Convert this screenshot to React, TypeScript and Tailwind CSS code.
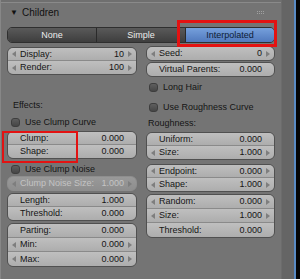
import React from "react";

type Row = { label: string; value: string; arrows?: boolean };

const font = { fontFamily: '"Liberation Sans", Arial, sans-serif' };

function Arrow({ dir }: { dir: "l" | "r" }) {
  return (
    <svg width="4" height="6" viewBox="0 0 4 6" className="shrink-0">
      {dir === "l" ? <path d="M4 0L0 3l4 3z" fill="#7e7e7e" /> : <path d="M0 0l4 3-4 3z" fill="#7e7e7e" />}
    </svg>
  );
}

function FieldRow({ label, value, arrows, tall }: Row & { tall?: boolean }) {
  return (
    <div
      className={`flex ${tall ? "h-[14px]" : "h-[13px]"} items-center whitespace-nowrap bg-gradient-to-b from-[#bfbfbf] to-[#adadad] text-[9px] leading-none text-[#151515]`}
    >
      <div className="flex w-[12px] justify-center">{arrows && <Arrow dir="l" />}</div>
      <span className="flex-1">{label}</span>
      <span>{value}</span>
      <div className="flex w-[12px] justify-center">{arrows && <Arrow dir="r" />}</div>
    </div>
  );
}

function Group({ rows, tall, className = "" }: { rows: Row[]; tall?: boolean; className?: string }) {
  return (
    <div className={`overflow-hidden rounded-[6px] border border-[#505050] divide-y divide-[#8a8a8a] ${className}`}>
      {rows.map((r) => (
        <FieldRow key={r.label} tall={tall} {...r} />
      ))}
    </div>
  );
}

function Check({ label, className = "" }: { label: string; className?: string }) {
  return (
    <div className={`flex h-[14px] items-center gap-[5px] whitespace-nowrap text-[9px] leading-none text-[#151515] ${className}`}>
      <div className="h-[9px] w-[9px] rounded-[3px] border border-[#3e3e3e] bg-gradient-to-b from-[#5e5e5e] to-[#464646]" />
      <span>{label}</span>
    </div>
  );
}

function Label({ text, className = "" }: { text: string; className?: string }) {
  return (
    <div className={`flex h-[14px] items-center whitespace-nowrap text-[9px] leading-none text-[#151515] ${className}`}>{text}</div>
  );
}

export default function App() {
  return (
    <div className="relative flex h-[279px] w-[300px] overflow-hidden bg-[#747474]" style={font}>
      {/* panel */}
      <div className="relative flex-1 border-l border-[#878787]">
        <div className="h-[3px] border-b border-[#8a8a8a] bg-[#6f6f6f]" />
        {/* header */}
        <div className="flex h-[19px] items-center pl-[9px] pr-[8px] text-[10px] leading-none text-[#111]">
          <span className="mr-[4px] text-[8px]">▼</span>
          <span>Children</span>
          <div className="ml-auto mr-[9px] grid grid-cols-4 gap-[1px]">
            {Array.from({ length: 8 }).map((_, i) => (
              <div key={i} className="h-[1px] w-[1px] bg-[#a0a0a0]" />
            ))}
          </div>
        </div>

        {/* tabs */}
        <div className="ml-[6px] mt-[5px] flex h-[16px] w-[268px] overflow-hidden rounded-[5px] border border-[#2f2f2f] whitespace-nowrap text-[9px] leading-none">
          <div className="flex flex-1 items-center justify-center border-r border-[#2a2a2a] bg-gradient-to-b from-[#5a5a5a] to-[#3e3e3e] text-[#ececec]">None</div>
          <div className="flex flex-1 items-center justify-center border-r border-[#2a2a2a] bg-gradient-to-b from-[#5a5a5a] to-[#3e3e3e] text-[#ececec]">Simple</div>
          <div className="flex flex-1 items-center justify-center bg-gradient-to-b from-[#76a0dc] to-[#5079bd] text-[#0e1c36]">Interpolated</div>
        </div>

        {/* columns */}
        <div className="ml-[6px] mt-[3px] flex w-[268px] gap-[9px]">
          {/* left */}
          <div className="flex w-[130px] flex-col">
            <Group className="mt-[1px]" rows={[{ label: "Display:", value: "10", arrows: true }, { label: "Render:", value: "100", arrows: true }]} />
            <Label text="Effects:" className="mt-[23px] pl-[6px]" />
            <Check label="Use Clump Curve" className="mt-[3px] pl-[4px]" />
            <Group className="mt-[2px]" rows={[{ label: "Clump:", value: "0.000" }, { label: "Shape:", value: "0.000" }]} />
            <Check label="Use Clump Noise" className="mt-[3px] pl-[4px]" />
            <div className="flex h-[15px] items-center whitespace-nowrap rounded-[6px] border border-[#8e8e8e] bg-gradient-to-b from-[#999] to-[#8e8e8e] text-[9px] leading-none text-[#c4c4c4]">
              <div className="flex w-[12px] justify-center"><Arrow dir="l" /></div>
              <span className="flex-1">Clump Noise Size:</span>
              <span>1.000</span>
              <div className="flex w-[12px] justify-center"><Arrow dir="r" /></div>
            </div>
            <Group className="mt-[2px]" rows={[{ label: "Length:", value: "1.000" }, { label: "Threshold:", value: "0.000" }]} />
            <Group tall className="mt-[2px]" rows={[{ label: "Parting:", value: "0.000" }, { label: "Min:", value: "0.000", arrows: true }, { label: "Max:", value: "0.000", arrows: true }]} />
          </div>

          {/* right */}
          <div className="flex w-[129px] flex-col">
            <Group rows={[{ label: "Seed:", value: "0", arrows: true }]} />
            <Group className="mt-[1px]" rows={[{ label: "Virtual Parents:", value: "0.000" }]} />
            <Check label="Long Hair" className="mt-[3px] pl-[3px]" />
            <Check label="Use Roughness Curve" className="mt-[6px] pl-[3px]" />
            <Label text="Roughness:" className="mt-[2px] pl-[2px]" />
            <Group className="mt-[2px]" rows={[{ label: "Uniform:", value: "0.000" }, { label: "Size:", value: "1.000", arrows: true }]} />
            <Group className="mt-[4px]" rows={[{ label: "Endpoint:", value: "0.000", arrows: true }, { label: "Shape:", value: "1.000", arrows: true }]} />
            <Group tall className="mt-[2px]" rows={[{ label: "Random:", value: "0.000", arrows: true }, { label: "Size:", value: "1.000", arrows: true }, { label: "Threshold:", value: "0.000" }]} />
          </div>
        </div>

        {/* red highlight boxes */}
        <div className="absolute left-[176px] top-[20px] h-[27px] w-[100px] border-[3px] border-[#e31212]" />
        <div className="absolute left-[1px] top-[131px] h-[32px] w-[76px] border-[2px] border-[#e31212]" />
      </div>

      {/* right edge strip */}
      <div className="w-[13px] border-l border-[#6c6c6c] bg-[#656565]" />
      <div className="w-[2px] bg-[#5a8bc4]" />
      <div className="w-[4px] bg-[#050505]" />
    </div>
  );
}
